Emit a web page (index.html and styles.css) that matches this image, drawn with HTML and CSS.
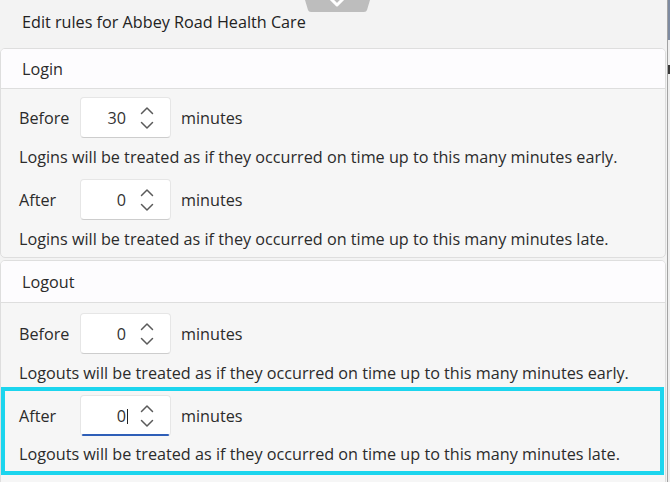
FILE: index.html
```html
<!DOCTYPE html>
<html>
<head>
<meta charset="utf-8">
<link rel="stylesheet" href="styles.css">
</head>
<body>
<div class="screen">
  <div class="main">
    <div class="top">
      <svg class="tab" width="66" height="13" viewBox="0 0 66 13">
        <path d="M0 0 H65 L62 10 Q61.5 12 59 12 H6 Q3.5 12 3 10 Z" fill="#bdbdbd"/>
        <polyline points="26,-1 32,5 38,-1" fill="none" stroke="#ffffff" stroke-width="3" stroke-linecap="round" stroke-linejoin="round"/>
      </svg>
      <div class="title">Edit rules for Abbey Road Health Care</div>
    </div>

    <section class="card">
      <div class="card-head">Login</div>
      <div class="card-body">
        <div class="group">
          <div class="row">
            <span class="label">Before</span>
            <div class="spin"><span class="val">30</span>
              <svg class="chev" width="14" height="24" viewBox="0 0 14 24"><polyline points="1.5,7.5 7,2 12.5,7.5"/><polyline points="1.5,16.5 7,22 12.5,16.5"/></svg>
            </div>
            <span class="unit">minutes</span>
          </div>
          <p class="desc">Logins will be treated as if they occurred on time up to this many minutes early.</p>
        </div>
        <div class="group">
          <div class="row">
            <span class="label">After</span>
            <div class="spin"><span class="val">0</span>
              <svg class="chev" width="14" height="24" viewBox="0 0 14 24"><polyline points="1.5,7.5 7,2 12.5,7.5"/><polyline points="1.5,16.5 7,22 12.5,16.5"/></svg>
            </div>
            <span class="unit">minutes</span>
          </div>
          <p class="desc">Logins will be treated as if they occurred on time up to this many minutes late.</p>
        </div>
      </div>
    </section>

    <section class="card card-logout">
      <div class="card-head">Logout</div>
      <div class="card-body">
        <div class="group">
          <div class="row">
            <span class="label">Before</span>
            <div class="spin"><span class="val">0</span>
              <svg class="chev" width="14" height="24" viewBox="0 0 14 24"><polyline points="1.5,7.5 7,2 12.5,7.5"/><polyline points="1.5,16.5 7,22 12.5,16.5"/></svg>
            </div>
            <span class="unit">minutes</span>
          </div>
          <p class="desc">Logouts will be treated as if they occurred on time up to this many minutes early.</p>
        </div>
        <div class="group focused">
          <div class="row">
            <span class="label">After</span>
            <div class="spin spin-focus"><span class="val">0<span class="caret"></span></span>
              <svg class="chev" width="14" height="24" viewBox="0 0 14 24"><polyline points="1.5,7.5 7,2 12.5,7.5"/><polyline points="1.5,16.5 7,22 12.5,16.5"/></svg>
            </div>
            <span class="unit">minutes</span>
          </div>
          <p class="desc desc-last">Logouts will be treated as if they occurred on time up to this many minutes late.</p>
        </div>
      </div>
    </section>
  </div>
  <div class="edge">
    <div class="edge-blue"></div>
    <div class="edge-dark"></div>
  </div>
</div>
</body>
</html>
```

FILE: styles.css
```css
* { box-sizing: border-box; }
html, body { margin: 0; padding: 0; }
body {
  width: 670px;
  height: 482px;
  overflow: hidden;
  background: #f3f3f3;
  font-family: "Open Sans", "Noto Sans", sans-serif;
  font-size: 16.2px;
  color: #2b2b2b;
}
.screen { display: flex; height: 482px; }
.main { width: 667px; padding-right: 1px; }

.top {
  position: relative;
  height: 48px;
  padding: 0 0 4px 22px;
  display: flex;
  align-items: center;
}
.tab { position: absolute; left: 305px; top: 0; }
.title { color: #222222; }

.card {
  background: #f6f6f6;
  border: 1px solid #dedede;
  border-radius: 5px;
  overflow: hidden;
}
.card + .card { margin-top: 2px; }
.card-head {
  height: 40px;
  background: #fdfcfe;
  border-bottom: 1px solid #dedede;
  display: flex;
  align-items: center;
  padding-left: 21px;
}
.card-body { padding-top: 4px; }
.card-logout .card-head { height: 42px; }
.card-logout .card-body { padding-top: 6px; padding-bottom: 20px; }

.group { margin: 0 5px 0 4px; padding: 4px 0 0 14px; }
.focused { outline: 4px solid #1cd5ee; }
.row { display: flex; align-items: center; height: 41px; }
.label { width: 61px; }
.spin {
  width: 91px;
  height: 41px;
  background: #ffffff;
  border: 1px solid #e6e6e6;
  border-bottom-color: #cdcdcd;
  border-radius: 4px;
  display: flex;
  align-items: center;
  position: relative;
}
.spin-focus::after {
  content: "";
  position: absolute;
  left: 1px;
  right: 1px;
  bottom: -1px;
  height: 2px;
  background: #2f5fb8;
  border-radius: 1px;
}
.val { width: 45px; text-align: right; position: relative; color: #333; }
.caret {
  position: absolute;
  right: -2px;
  top: 4px;
  width: 1px;
  height: 15px;
  background: #222;
}
.chev { margin-left: 14px; }
.chev polyline { fill: none; stroke: #5a5a5a; stroke-width: 1.5; stroke-linecap: round; stroke-linejoin: round; }
.unit { margin-left: 10px; }
.desc { margin: 0; height: 37px; display: flex; align-items: center; }
.desc-last { height: 35px; }

.edge {
  width: 3px;
  border-left: 1px solid #a3a3a3;
  background: #efefef;
  position: relative;
}
.edge-blue { height: 40px; background: #7d8aa0; }
.edge-dark { margin-top: 25px; height: 9px; background: #3a3a3a; }
```
